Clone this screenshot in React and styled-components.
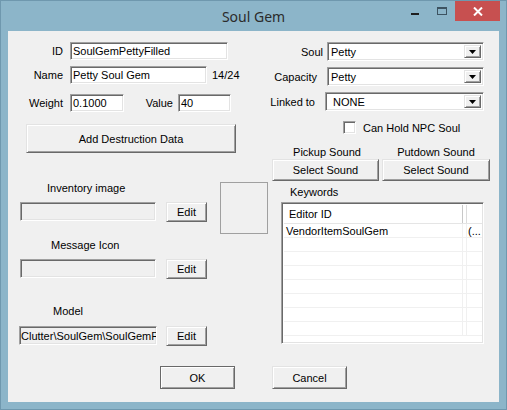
import React from 'react';
import styled, { createGlobalStyle, css } from 'styled-components';

const GlobalStyle = createGlobalStyle`
  html, body {
    margin: 0;
    padding: 0;
  }
  body {
    width: 507px;
    height: 410px;
    overflow: hidden;
    font-family: "Liberation Sans", Arial, sans-serif;
    font-size: 11px;
    color: #000;
  }
`;

const sunken = css`
  box-sizing: border-box;
  border: 1px solid;
  border-color: #a0a0a0 #ffffff #ffffff #a0a0a0;
  box-shadow: inset 1px 1px 0 #696969, inset -1px -1px 0 #e3e3e3;
`;

const raised = css`
  box-sizing: border-box;
  border: 1px solid;
  border-color: #e3e3e3 #696969 #696969 #e3e3e3;
  box-shadow: inset 1px 1px 0 #ffffff, inset -1px -1px 0 #a0a0a0;
  background: #f0f0f0;
`;

const Window = styled.div`
  box-sizing: border-box;
  width: 507px;
  height: 410px;
  background: #8cb5c9;
  border: 1px solid #6f98ae;
  display: flex;
  flex-direction: column;
`;

const TitleBar = styled.div`
  height: 30px;
  flex-shrink: 0;
  display: grid;
  grid-template-columns: 1fr auto 1fr;
  align-items: center;
`;

const Title = styled.div`
  grid-column: 2;
  font-family: "Noto Sans", "Open Sans", sans-serif;
  font-size: 14px;
  color: #2b2b2b;
  padding-top: 1px;
`;

const Controls = styled.div`
  grid-column: 3;
  justify-self: end;
  align-self: start;
  display: flex;
  margin-right: 6px;
  height: 20px;
`;

const CtrlButton = styled.div`
  width: ${p => p.$w}px;
  height: 20px;
  display: flex;
  justify-content: center;
  align-items: flex-start;
  box-sizing: border-box;
  padding-top: ${p => p.$pt}px;
  background: ${p => p.$bg || 'transparent'};
`;

const MinGlyph = styled.div`
  width: 8px;
  height: 2px;
  background: #1f1f1f;
`;

const MaxGlyph = styled.div`
  box-sizing: border-box;
  width: 10px;
  height: 8px;
  border: 1px solid #3d5361;
  border-top-width: 2px;
`;

const Client = styled.div`
  flex: 1;
  margin: 0 7px 7px;
  background: #f0f0f0;
  display: flex;
  flex-direction: column;
`;

const Main = styled.div`
  height: 335px;
  display: flex;
  flex-shrink: 0;
`;

const Column = styled.div`
  width: ${p => p.$w}px;
  flex-shrink: 0;
  padding-top: 11px;
  display: flex;
  flex-direction: column;
`;

const FieldRow = styled.div`
  display: flex;
  align-items: center;
  height: ${p => p.$h || 18}px;
  margin-top: ${p => p.$mt || 0}px;
  padding-left: ${p => p.$pl || 0}px;
  flex-shrink: 0;
`;

const FieldLabel = styled.span`
  box-sizing: border-box;
  width: ${p => p.$w}px;
  padding-right: ${p => p.$pr || 0}px;
  text-align: right;
  white-space: nowrap;
  flex-shrink: 0;
`;

const TextBox = styled.div`
  ${sunken};
  width: ${p => p.$w}px;
  height: ${p => p.$h || 18}px;
  margin-left: ${p => p.$ml || 0}px;
  padding: 0 ${p => p.$px ?? 2}px;
  background: ${p => (p.$disabled ? '#f0f0f0' : '#ffffff')};
  display: flex;
  align-items: center;
  white-space: nowrap;
  overflow: hidden;
  flex-shrink: 0;
`;

const Counter = styled.span`
  margin-left: 5px;
`;

const Button = styled.button`
  ${raised};
  width: ${p => p.$w}px;
  height: ${p => p.$h}px;
  margin: 0;
  margin-left: ${p => p.$ml || 0}px;
  padding: 0;
  font: inherit;
  color: #000;
  flex-shrink: 0;
  ${p =>
    p.$default &&
    css`
      border-color: #696969;
      box-shadow: inset 1px 1px 0 #ffffff, inset -1px -1px 0 #a0a0a0;
    `}
`;

const WideButton = styled(Button)`
  margin-top: 12px;
  margin-left: 18px;
`;

const ImageSection = styled.div`
  display: flex;
  align-items: flex-start;
  margin-top: 29px;
`;

const SubColumn = styled.div`
  width: 206px;
  display: flex;
  flex-direction: column;
`;

const SectionLabel = styled.div`
  height: 13px;
  line-height: 13px;
  padding-left: ${p => p.$pl}px;
  margin-top: ${p => p.$mt || 0}px;
`;

const PathRow = styled.div`
  display: flex;
  align-items: flex-start;
  margin-top: ${p => p.$mt || 7}px;
  padding-left: ${p => p.$pl}px;
`;

const Preview = styled.div`
  box-sizing: border-box;
  width: 49px;
  height: 52px;
  margin-left: 8px;
  border: 1px solid #a0a0a0;
`;

const Combo = styled.div`
  ${sunken};
  width: ${p => p.$w}px;
  height: 19px;
  margin-left: ${p => p.$ml}px;
  background: #ffffff;
  display: flex;
  align-items: stretch;
  padding: 2px;
  flex-shrink: 0;
`;

const ComboText = styled.div`
  flex: 1;
  display: flex;
  align-items: center;
  padding-left: ${p => p.$pl}px;
`;

const DropButton = styled.div`
  ${raised};
  width: 17px;
  display: flex;
  align-items: center;
  justify-content: center;
`;

const CheckRow = styled.div`
  display: flex;
  align-items: center;
  margin-top: 10px;
  padding-left: 75px;
  height: 13px;
`;

const CheckBox = styled.div`
  ${sunken};
  width: 13px;
  height: 13px;
  background: #ffffff;
`;

const CheckText = styled.span`
  margin-left: 7px;
`;

const SoundGrid = styled.div`
  display: grid;
  grid-template-columns: 107px 108px;
  column-gap: 3px;
  margin-top: 12px;
  margin-left: 4px;
`;

const SoundLabel = styled.div`
  height: 13px;
  line-height: 13px;
  text-align: center;
  padding-left: ${p => p.$pl || 0}px;
`;

const KeywordsLabel = styled.div`
  height: 13px;
  line-height: 13px;
  margin-top: 5px;
  padding-left: 22px;
`;

const ListBox = styled.div`
  ${sunken};
  width: 203px;
  height: 142px;
  margin-top: 3px;
  margin-left: 13px;
  padding: 2px 1px 1px 2px;
  background: #ffffff;
  overflow: hidden;
`;

const ListHeader = styled.div`
  display: flex;
  height: 19px;
  box-sizing: border-box;
  border-bottom: 1px solid #e5e5e5;
`;

const ListRow = styled.div`
  display: flex;
  height: 14px;
  box-sizing: border-box;
  border-bottom: 1px solid #f0f0f0;
`;

const Cell = styled.div`
  box-sizing: border-box;
  width: ${p => (p.$w ? `${p.$w}px` : 'auto')};
  flex: ${p => (p.$w ? '0 0 auto' : '1')};
  border-right: ${p => (p.$line ? `1px solid ${p.$line}` : 'none')};
  padding-left: ${p => p.$pl || 0}px;
  display: flex;
  align-items: center;
  white-space: nowrap;
  overflow: hidden;
`;

const Footer = styled.div`
  display: flex;
  justify-content: center;
  gap: 37px;
`;

const Arrow = () => (
  <svg width="7" height="4" viewBox="0 0 7 4">
    <polygon points="0,0 7,0 3.5,4" fill="#000" />
  </svg>
);

const CloseGlyph = () => (
  <svg width="10" height="9" viewBox="0 0 10 9">
    <path d="M1 0.5 L9 8.5 M9 0.5 L1 8.5" stroke="#fff" strokeWidth="2" />
  </svg>
);

const ComboBox = ({ w, ml, pl = 1, children }) => (
  <Combo $w={w} $ml={ml}>
    <ComboText $pl={pl}>{children}</ComboText>
    <DropButton>
      <Arrow />
    </DropButton>
  </Combo>
);

const keywordRows = [['VendorItemSoulGem', '(...'], ...Array(7).fill(['', ''])];

export default function App() {
  return (
    <>
      <GlobalStyle />
      <Window>
        <TitleBar>
          <Title>Soul Gem</Title>
          <Controls>
            <CtrlButton $w={26} $pt={12}>
              <MinGlyph />
            </CtrlButton>
            <CtrlButton $w={27} $pt={6}>
              <MaxGlyph />
            </CtrlButton>
            <CtrlButton $w={45} $pt={6} $bg="#c75050">
              <CloseGlyph />
            </CtrlButton>
          </Controls>
        </TitleBar>

        <Client>
          <Main>
            <Column $w={260}>
              <FieldRow>
                <FieldLabel $w={55}>ID</FieldLabel>
                <TextBox $w={158} $ml={7}>SoulGemPettyFilled</TextBox>
              </FieldRow>
              <FieldRow $mt={6}>
                <FieldLabel $w={55}>Name</FieldLabel>
                <TextBox $w={137} $ml={7}>Petty Soul Gem</TextBox>
                <Counter>14/24</Counter>
              </FieldRow>
              <FieldRow $mt={10}>
                <FieldLabel $w={55}>Weight</FieldLabel>
                <TextBox $w={54} $ml={7}>0.1000</TextBox>
                <FieldLabel $w={54} $pr={5}>Value</FieldLabel>
                <TextBox $w={53}>40</TextBox>
              </FieldRow>
              <WideButton $w={210} $h={29}>Add Destruction Data</WideButton>

              <ImageSection>
                <SubColumn>
                  <SectionLabel $pl={39}>Inventory image</SectionLabel>
                  <PathRow $pl={12}>
                    <TextBox $w={136} $h={19} $disabled />
                    <Button $w={41} $h={20} $ml={10}>Edit</Button>
                  </PathRow>
                  <SectionLabel $pl={43} $mt={17}>Message Icon</SectionLabel>
                  <PathRow $pl={12}>
                    <TextBox $w={136} $h={19} $disabled />
                    <Button $w={41} $h={20} $ml={10}>Edit</Button>
                  </PathRow>
                  <SectionLabel $pl={45} $mt={26}>Model</SectionLabel>
                  <PathRow $pl={11} $mt={8}>
                    <TextBox $w={138} $h={19} $px={1} $disabled>
                      Clutter\SoulGem\SoulGemF
                    </TextBox>
                    <Button $w={41} $h={20} $ml={9}>Edit</Button>
                  </PathRow>
                </SubColumn>
                <Preview />
              </ImageSection>
            </Column>

            <Column $w={231}>
              <FieldRow $h={19}>
                <FieldLabel $w={55}>Soul</FieldLabel>
                <ComboBox w={157} ml={4}>Petty</ComboBox>
              </FieldRow>
              <FieldRow $h={19} $mt={6}>
                <FieldLabel $w={55} $pr={6}>Capacity</FieldLabel>
                <ComboBox w={157} ml={4}>Petty</ComboBox>
              </FieldRow>
              <FieldRow $h={19} $mt={6}>
                <FieldLabel $w={55} $pr={8}>Linked to</FieldLabel>
                <ComboBox w={159} ml={2} pl={5}>NONE</ComboBox>
              </FieldRow>
              <CheckRow>
                <CheckBox />
                <CheckText>Can Hold NPC Soul</CheckText>
              </CheckRow>
              <SoundGrid>
                <SoundLabel $pl={3}>Pickup Sound</SoundLabel>
                <SoundLabel>Putdown Sound</SoundLabel>
                <Button $w={107} $h={22}>Select Sound</Button>
                <Button $w={108} $h={22}>Select Sound</Button>
              </SoundGrid>
              <KeywordsLabel>Keywords</KeywordsLabel>
              <ListBox>
                <ListHeader>
                  <Cell $w={179} $pl={5} $line="#c8c8c8">Editor ID</Cell>
                  <Cell $w={4} $line="#dcdcdc" />
                  <Cell />
                </ListHeader>
                {keywordRows.map(([id, extra], i) => (
                  <ListRow key={i}>
                    <Cell $w={179} $pl={2} $line="#f0f0f0">{id}</Cell>
                    <Cell $w={4} $line="#f0f0f0" />
                    <Cell $pl={1}>{extra}</Cell>
                  </ListRow>
                ))}
              </ListBox>
            </Column>
          </Main>

          <Footer>
            <Button $w={75} $h={23} $default>OK</Button>
            <Button $w={75} $h={23}>Cancel</Button>
          </Footer>
        </Client>
      </Window>
    </>
  );
}
